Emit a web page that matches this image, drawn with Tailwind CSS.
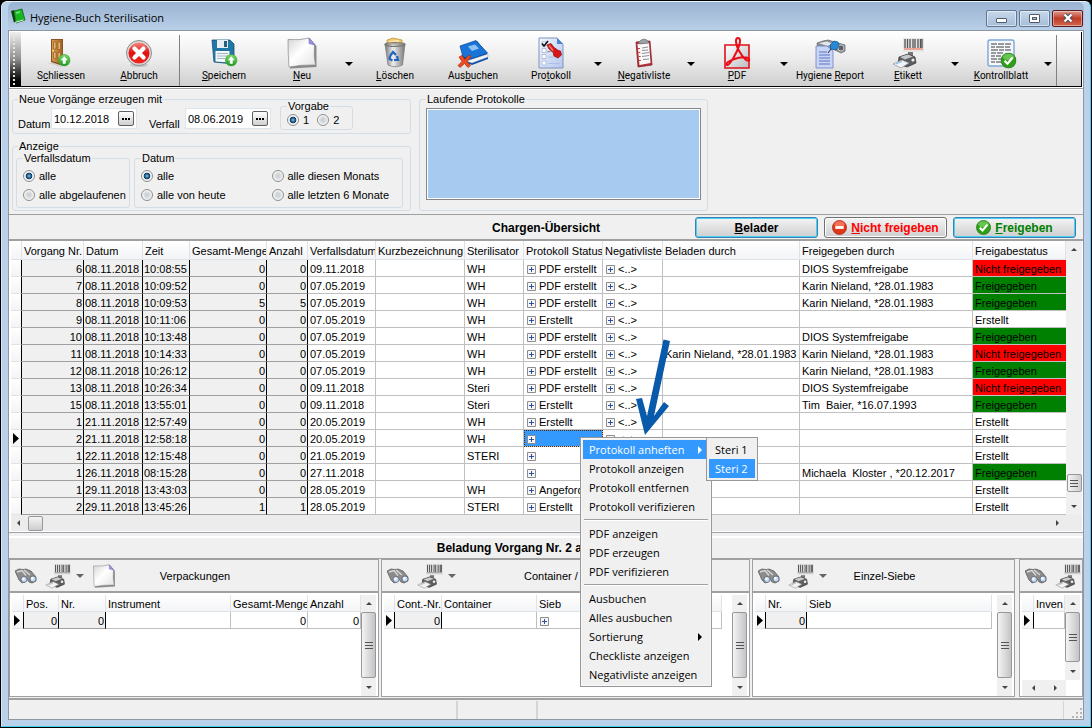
<!DOCTYPE html>
<html lang="de">
<head>
<meta charset="utf-8">
<meta name="viewport" content="width=device-width, initial-scale=1">
<title>Hygiene-Buch Sterilisation</title>
<script src="https://cdn.jsdelivr.net/npm/@tailwindcss/browser@4"></script>
</head>
<body class="bg-black font-['Liberation_Sans',Arial,sans-serif] text-[11px] leading-3 text-black">

<svg class="absolute size-0" aria-hidden="true">
  <defs>
    <linearGradient id="gGreen" x1="0" y1="0" x2="0" y2="1"><stop offset="0" stop-color="#7fdc6a"/><stop offset="1" stop-color="#179a1c"/></linearGradient>
    <linearGradient id="gRed" x1="0" y1="0" x2="0" y2="1"><stop offset="0" stop-color="#f58a80"/><stop offset=".5" stop-color="#e01010"/><stop offset="1" stop-color="#f02a20"/></linearGradient>
    <linearGradient id="gPage" x1="0" y1="0" x2="1" y2="1"><stop offset="0" stop-color="#d4d4d4"/><stop offset=".45" stop-color="#fff"/><stop offset="1" stop-color="#e2e2e2"/></linearGradient>
    <linearGradient id="gWood" x1="0" y1="0" x2="1" y2="0"><stop offset="0" stop-color="#d79a4c"/><stop offset="1" stop-color="#a96523"/></linearGradient>
    <linearGradient id="gSteel" x1="0" y1="0" x2="1" y2="0"><stop offset="0" stop-color="#777"/><stop offset=".4" stop-color="#eee"/><stop offset="1" stop-color="#777"/></linearGradient>
    <linearGradient id="gSheet" x1="0" y1="0" x2="1" y2="1"><stop offset="0" stop-color="#f4f8ff"/><stop offset="1" stop-color="#b4c6ee"/></linearGradient>
    <linearGradient id="gPdf" x1="0" y1="0" x2="1" y2="1"><stop offset="0" stop-color="#fff"/><stop offset="1" stop-color="#b9bdc1"/></linearGradient>
    <symbol id="up" viewBox="0 0 12 12"><circle cx="6" cy="6" r="5.6" fill="url(#gGreen)" stroke="#3c9a38" stroke-width=".6"/><path d="M6 2.2 9.4 6H7.4v3.4H4.6V6H2.6z" fill="#fff"/></symbol>
    <symbol id="door" viewBox="0 0 32 32">
      <path d="M3 26 16 30 22 27 17 24z" fill="#cfcfcf"/><path d="M6 2h12v25l-3 1-9-3z" fill="#8a5420"/>
      <path d="M7 3h10v24l-10-3z" fill="url(#gWood)"/><path d="M8.500 5h2.500v7h-2.500zM13 5H15.500v7.500h-2.500zM8.500 15h2.500v7l-2.500-1zM13 15.500H15.500V24l-2.500-1z" fill="#e6b878" stroke="#8c5a22" stroke-width=".7"/>
      <circle cx="8.200" cy="13.700" r="1" fill="#f5e36a"/><use href="#up" x="13" y="17" width="12.500" height="12.500"/></symbol>
    <symbol id="cancel" viewBox="0 0 32 32"><ellipse cx="16" cy="28" rx="9" ry="2" fill="#0002"/><circle cx="16" cy="16" r="12.500" fill="#d9d9d9" stroke="#8f8f8f"/><circle cx="16" cy="16" r="10.500" fill="url(#gRed)"/>
      <path d="m11.500 11.500 9 9m0-9-9 9" stroke="#fff" stroke-width="4.200" stroke-linecap="round"/></symbol>
    <symbol id="save" viewBox="0 0 32 32"><path d="M4 3h18l4 4v20L6 25z" fill="#2178a6" stroke="#125276" stroke-width=".8"/><path d="M9 3h11v8H9z" fill="#e9eef2"/><path d="M16 4h3v6h-3z" fill="#24607f"/>
      <path d="M7.500 14h14v11.500l-14-1z" fill="#f6f8fa"/><path d="M9 16.500h11M9 19h11M9 21.500h8" stroke="#9fb6c4"/><use href="#up" x="17" y="17" width="12.500" height="12.500"/></symbol>
    <symbol id="page" viewBox="0 0 32 32"><path d="M3 4 24 1.500 30.500 9v21L4 31.500z" fill="#8a8a8a"/><path d="M2 2.500Q14 3.500 23 1l5.500 7Q27.500 19 29.500 28 16 27.500 3 30 2 18 2 2.500z" fill="url(#gPage)" stroke="#888" stroke-width=".7"/>
      <path d="M23 1l6 7-6-1.500z" fill="#9a95e8" stroke="#6c68b8" stroke-width=".6"/></symbol>
    <symbol id="bin" viewBox="0 0 32 32"><path d="m8 3 6-2 9 2v6H8z" fill="#f0c76a" stroke="#b98c34" stroke-width=".7"/><path d="m10 4 10-1v5H10z" fill="#ffe6a8"/>
      <path d="M6 7h20l-2.500 21Q16 31.500 9 28z" fill="url(#gSteel)" stroke="#777" stroke-width=".7"/><ellipse cx="16" cy="7.500" rx="10" ry="1.800" fill="none" stroke="#777" stroke-width="1.300"/>
      <path d="m11 19 3-4 3 3M18 19l1 4h-4M13.500 23.500 10.500 22l.5-3" fill="none" stroke="#2065c4" stroke-width="2.200"/></symbol>
    <symbol id="book" viewBox="0 0 32 32"><path d="m6 10 14-6 11 14v4l-16 6-10-4z" fill="#0a4ea6"/><path d="m9 24 6 2 16-6v-3l-16 5z" fill="#f1f4f8" stroke="#8fa2b8" stroke-width=".5"/><path d="M3 9 19 3.500 30.500 16 14 22 6 20z" fill="#1a74d8" stroke="#0a4292" stroke-width=".7"/><path d="m11 9.500 7-2 4 4-7 2.500z" fill="#8ec4f4"/>
      <path d="m2 20 3-1.500 3 4L12 18l2 1.500-4 5 3.500 4L11 30.500l-3.500-4L3 30.500l-2-2 4-4z" fill="#f04a20" stroke="#a82808" stroke-width=".7"/></symbol>
    <symbol id="protocol" viewBox="0 0 32 32"><path d="M4 1h18l6 6v24H4z" fill="url(#gSheet)" stroke="#7f93bd"/><path d="M22 1v6h6z" fill="#4b86d8"/>
      <path d="M7 5h4v4H7zM7 11.500h4v4H7zM7 17.500h4v4H7zM7 24h4v4H7z" fill="#fff" stroke="#aab6d0" stroke-width=".8"/><path d="m7 6.500 2 2.500L13 4" fill="none" stroke="#111" stroke-width="1.600"/><path d="M13 26.500h12M13 20h6" stroke="#b0bede"/>
      <path d="m12 15 5-1" stroke="#888"/><path d="m12 8 4-1.500 3 4 4.500 3 2 .5 1 4-3.500 3-4-2-1-4-4-3z" fill="#d81818" stroke="#8c0808" stroke-width=".7"/><path d="m14 8.500 4 5" stroke="#ff7d6e" stroke-width="1.400"/></symbol>
    <symbol id="clip" viewBox="0 0 32 32"><path d="m8 5 14-1 2 24-14 2z" fill="#b82f38" stroke="#7a1a22" stroke-width=".7"/><path d="m9.500 7 11.500-1 1.500 20-11 2z" fill="#fafafa"/><path d="m11 5 2-2 3-1 3 1 2 3-10 1z" fill="#9aa0a8" stroke="#666" stroke-width=".6"/>
      <path d="m14 11 6-1m-6 3.500 6-.5m-6 3.500 7-1m-7 4 7-1m-6 4 6-.5" stroke="#8b8f96"/><path d="M11 11v1m.3 3v1m.3 3v1m.3 3v1" stroke="#d03a3a" stroke-width="2"/></symbol>
    <symbol id="pdf" viewBox="0 0 32 32"><path d="M4 8h24v23H4z" fill="url(#gPdf)" stroke="#e0101a" stroke-width="1.600"/><path d="M15 4c0-4 4-4 4 0 0 5-6 17-10 22-3 4-5 1-2-1 6-4 16-6 20-4 3 2 0 4-3 1-4-4-9-12-9-18z" fill="none" stroke="#ec0c14" stroke-width="2"/></symbol>
    <symbol id="report" viewBox="0 0 32 32"><path d="m3 6 6-2 5-1 10 3 7 2v6l-4 2-8-4H4z" fill="#8d9094" stroke="#5d6064" stroke-width=".7"/><path d="m5 6 8-1.500 6 2.500-6 2z" fill="#e4e6e8"/><circle cx="27" cy="11" r="3" fill="#5b6068" stroke="#ccc"/>
      <path d="M2 9h11l6 5v17H2z" fill="#c9d5f6" stroke="#6c82c4" stroke-width=".8"/><path d="M5 15h8M5 18h11M5 21h11M5 24h11M5 27h11" stroke="#5a72bc"/><path d="m16 8 4-4 4 1 1 4-3 4-5-1z" fill="#2788d8" stroke="#0e5496" stroke-width=".7"/><path d="m17 12-3 4" stroke="#223"/></symbol>
    <symbol id="label" viewBox="0 0 32 32"><path d="M11 1h21v14H11z" fill="#e6e6e6"/><path d="M13 2v9M15.500 2v9M18 2v9M21 2v9M23 2v9M26 2v9M28.500 2v9M30 2v9" stroke="#555" stroke-width="1.300"/><path d="M12 12h19" stroke="#f0806a" stroke-width="1.300"/>
      <path d="M16 15h5v4h-5z" fill="#777"/><path d="m7 20 9-3 7 3 1 6-9 4-9-3z" fill="#5c5f62" stroke="#2f3235" stroke-width=".7"/><path d="m8 20 8-2.500 5 2-8 3z" fill="#c6c9cc"/><path d="m1 27 9-4 7 3-8 5z" fill="#f0f4f8" stroke="#8b8f94" stroke-width=".7"/><path d="m4 27 6-2.500" stroke="#7fb8e8"/><circle cx="21" cy="23" r="1.600" fill="#eee"/></symbol>
    <symbol id="sheet" viewBox="0 0 32 32"><rect x="3" y="3" width="26" height="26" rx="2" fill="#f4f8fd" stroke="#7da6d6" stroke-width="1.400"/>
      <path d="M6 7h6m1 0h6m1 0h6M6 10h4m1 0h8m1 0h5M6 13h7m1 0h5m1 0h6M6 16h5m1 0h6M6 19h4m1 0h5M6 22h6m1 0h3M6 25h4m1 0h5" stroke="#7a7a7a" stroke-width="1.600"/><use href="#ok" x="15.500" y="15.500" width="16" height="16"/></symbol>
    <symbol id="ok" viewBox="0 0 16 16"><circle cx="8" cy="8" r="7.500" fill="#2da018" stroke="#176e0c" stroke-width=".7"/><ellipse cx="8" cy="4.500" rx="5.500" ry="3.300" fill="#8edc78" opacity=".6"/><path d="m4 8.200 3 3L12.200 5" fill="none" stroke="#fff" stroke-width="2.200"/></symbol>
    <symbol id="no" viewBox="0 0 16 16"><circle cx="8" cy="8" r="7.500" fill="#e03618" stroke="#a01c08" stroke-width=".7"/><ellipse cx="8" cy="4.500" rx="5.500" ry="3.300" fill="#ff9a80" opacity=".6"/><path d="M3.500 6.500h9v3h-9z" fill="#fff"/></symbol>
    <symbol id="bino" viewBox="0 0 22 16"><path d="m0 3 4-2 4 .5 3-.5 5 2 5 6v4l-4 2-3-1-2-3-2 1v2l-3 1-3-3z" fill="#8c8c8c" stroke="#555" stroke-width=".7"/><path d="m2 4 5-1.500 4 5M9 2l6 5" stroke="#d8d8d8" stroke-width="1.400" fill="none"/><circle cx="9" cy="11.500" r="3" fill="#bcdcff" stroke="#666" stroke-width=".8"/><circle cx="18" cy="11" r="3" fill="#bcdcff" stroke="#666" stroke-width=".8"/><circle cx="8.400" cy="10.800" r="1.200" fill="#fff"/><circle cx="17.300" cy="10.200" r="1.200" fill="#fff"/></symbol>
    <symbol id="greenbook" viewBox="0 0 16 16"><path d="m1 3 3-1 2 12-2 1z" fill="#0d3d10"/><path d="m4 3 8-2 3 11-9 3z" fill="#18b422" stroke="#0a6c12" stroke-width=".8"/><path d="m4.500 14.500 9-2.500" stroke="#eee"/><path d="m6 5 4-1" stroke="#5fe068" stroke-width="2"/></symbol>
    <symbol id="dn" viewBox="0 0 8 4"><path d="M0 0h8L4 4z" fill="currentColor"/></symbol>
    <symbol id="upt" viewBox="0 0 8 4"><path d="M0 4h8L4 0z" fill="currentColor"/></symbol>
    <symbol id="lt" viewBox="0 0 4 8"><path d="M4 0v8L0 4z" fill="currentColor"/></symbol>
    <symbol id="rt" viewBox="0 0 4 8"><path d="M0 0v8l4-4z" fill="currentColor"/></symbol>
    <symbol id="mark" viewBox="0 0 6 11"><path d="M0 0v11l6-5.500z"/></symbol>
    <symbol id="plus" viewBox="0 0 9 9"><path d="M.5.5h8v8h-8z" fill="#f6f6f6" stroke="#8c8c8c"/><path d="M4.500 2v5M2 4.500h5" stroke="#2a4fa8"/></symbol>
  </defs>
</svg>

<div class="relative flex min-h-screen flex-col bg-black p-px">
<main class="flex flex-1 flex-col rounded-t-md border border-t-[#eaf2fa] border-r-[#3fd0ea] border-b-[#3fd0ea] border-l-[#d5e6f5] bg-[#b9d1ea] px-[6px] pb-[6px]">

  <header class="flex h-7 items-center rounded-t-md bg-linear-to-b from-[#9ab3d1] to-[#b9cfe8] pl-[2px] pr-px">
    <svg class="mr-1 size-4"><use href="#greenbook"/></svg>
    <h1 class="flex-1 pt-1 font-['Open_Sans',sans-serif] text-[11px] leading-4">Hygiene-Buch Sterilisation</h1>
    <div class="mt-1 flex gap-[2px]">
      <button aria-label="Minimieren" class="flex h-[17px] w-[31px] items-center justify-center rounded-[2px] border border-[#5f7590] bg-linear-to-b from-[#c7d8ea] to-[#a5bdd8] inset-ring inset-ring-white/50"><span class="mt-1 h-[5px] w-[11px] rounded-[1px] border border-[#515c6b] bg-white"></span></button>
      <button aria-label="Maximieren" class="flex h-[17px] w-[31px] items-center justify-center rounded-[2px] border border-[#5f7590] bg-linear-to-b from-[#c7d8ea] to-[#a5bdd8] inset-ring inset-ring-white/50"><span class="flex h-[9px] w-[11px] items-center justify-center rounded-[1px] border border-[#515c6b] bg-white"><span class="h-[3px] w-[5px] border border-[#515c6b] bg-[#a5bdd8]"></span></span></button>
      <button aria-label="Schließen" class="flex h-[17px] w-[31px] items-center justify-center rounded-[2px] border border-[#5c1a1a] bg-linear-to-b from-[#dc9a90] via-[#bf3a24] to-[#d06850] inset-ring inset-ring-white/40"><svg class="h-[10px] w-3" viewBox="0 0 12 10"><path d="m2.500 1.500 7 7m0-7-7 7" stroke="#4a4f5c" stroke-width="4"/><path d="m2.500 1.500 7 7m0-7-7 7" stroke="#fff" stroke-width="2.200"/></svg></button>
    </div>
  </header>

  <div class="flex flex-1 flex-col border border-[#8f979f] bg-[#f0f0f0]">

    <!-- Werkzeugleiste -->
    <div class="border-b border-[#a0a0a0] bg-white p-px">
      <div id="toolbar" role="toolbar" class="flex h-[55px] items-stretch border-r border-b border-black bg-linear-to-b from-white via-[#ececec] to-[#cfcfcf]">
        <span class="mr-px w-[11px] bg-linear-to-b from-[#f0f0f0] via-[#909090] to-black pt-1 pb-px pl-[3px]"><span class="block h-full border-l-2 border-dotted border-[#e4e4e4]"></span></span>
      </div>
    </div>

    <!-- Filter -->
    <div class="flex gap-2 border-t border-white pt-[3px] pb-[3px] pl-[3px]">
      <div class="flex w-[399px] flex-col gap-[6px]">
        <fieldset class="h-[41px] rounded-[3px] border border-[#d3dde5] pl-1">
          <legend class="ml-px px-px">Neue Vorgänge erzeugen mit</legend>
          <div class="flex items-start">
            <label for="d1" class="mt-[13px] w-[34px] pl-px">Datum</label>
            <span class="mt-[3px] flex h-[21px] w-[86px] items-center border border-[#dde5ec] bg-white pr-[2px]">
              <input id="d1" value="10.12.2018" class="w-0 flex-1 pl-[2px] outline-none">
              <button aria-label="Datum wählen" class="flex h-[15px] w-4 items-center justify-center rounded-[2px] border border-[#606060] bg-linear-to-b from-white to-[#cfcfcf]"><svg class="h-[2px] w-2" viewBox="0 0 8 2"><path d="M0 0h2v2H0zM3 0h2v2H3zM6 0h2v2H6z"/></svg></button>
            </span>
            <label for="d2" class="mt-[13px] ml-3 w-9">Verfall</label>
            <span class="mt-[3px] flex h-[21px] w-[86px] items-center border border-[#dde5ec] bg-white pr-[2px]">
              <input id="d2" value="08.06.2019" class="w-0 flex-1 pl-[2px] outline-none">
              <button aria-label="Verfall wählen" class="flex h-[15px] w-4 items-center justify-center rounded-[2px] border border-[#606060] bg-linear-to-b from-white to-[#cfcfcf]"><svg class="h-[2px] w-2" viewBox="0 0 8 2"><path d="M0 0h2v2H0zM3 0h2v2H3zM6 0h2v2H6z"/></svg></button>
            </span>
            <fieldset class="-mt-[5px] ml-[9px] h-[30px] w-[73px] rounded-[3px] border border-[#d3dde5] pl-[6px]">
              <legend class="px-px">Vorgabe</legend>
              <div class="flex gap-2 pt-px" data-radios="vorgabe" data-kind="short"></div>
            </fieldset>
          </div>
        </fieldset>
        <fieldset class="h-[71px] rounded-[3px] border border-[#d3dde5] pl-[3px]">
          <legend class="ml-[2px] px-px">Anzeige</legend>
          <div class="flex gap-1">
            <fieldset class="h-[56px] w-[114px] rounded-[3px] border border-[#d3dde5] pl-[6px]">
              <legend class="px-px">Verfallsdatum</legend>
              <div class="grid pt-[2px]" data-radios="verfall" data-kind="long"></div>
            </fieldset>
            <fieldset class="h-[56px] w-[269px] rounded-[3px] border border-[#d3dde5] pl-[6px]">
              <legend class="px-px">Datum</legend>
              <div class="grid grid-cols-2 pt-[2px]" data-radios="datum" data-kind="long"></div>
            </fieldset>
          </div>
        </fieldset>
      </div>
      <fieldset class="h-[118px] w-[289px] rounded-[3px] border border-[#d3dde5] px-[6px]">
        <legend class="px-px">Laufende Protokolle</legend>
        <div class="mt-[3px] h-[92px] border border-[#828790] bg-[#a6caf0] inset-ring inset-ring-white"></div>
      </fieldset>
    </div>

    <!-- Chargen-Übersicht -->
    <div class="grid h-[27px] grid-cols-[1fr_auto_1fr] items-center border-t border-b-2 border-[#a0a0a0]">
      <h2 class="col-start-2 pt-px text-xs font-bold">Chargen-Übersicht</h2>
      <div class="flex justify-end gap-[6px] pr-[7px] text-xs font-bold">
        <button class="flex h-[21px] w-[123px] items-center justify-center gap-1 rounded-[3px] border border-[#3c7fb1] bg-linear-to-b from-[#f4f4f4] to-[#cfcfcf] pt-px inset-ring inset-ring-[#48d0f4]"><span><u>B</u>elader</span></button>
        <button class="flex h-[21px] w-[123px] items-center justify-center gap-1 rounded-[3px] border border-[#707070] bg-linear-to-b from-[#f4f4f4] to-[#cfcfcf] pt-px text-[#f00] inset-ring inset-ring-white"><svg class="size-[15px]"><use href="#no"/></svg><span><u>N</u>icht freigeben</span></button>
        <button class="flex h-[21px] w-[123px] items-center justify-center gap-1 rounded-[3px] border border-[#3c7fb1] bg-linear-to-b from-[#f4f4f4] to-[#cfcfcf] pt-px text-[#008000] inset-ring inset-ring-[#48d0f4]"><svg class="size-[15px]"><use href="#ok"/></svg><span><u>F</u>reigeben</span></button>
      </div>
    </div>

    <div class="border-b border-[#a0a0a8] bg-white pb-px pl-[2px] pr-px">
      <div class="flex">
        <table class="w-full table-fixed border-separate border-spacing-0">
          <colgroup><col class="w-[11px]"><col class="w-[62px]"><col class="w-[59px]"><col class="w-[47px]"><col class="w-[77px]"><col class="w-[41px]"><col class="w-[68px]"><col class="w-[89px]"><col class="w-[59px]"><col class="w-[79px]"><col class="w-[60px]"><col class="w-[137px]"><col class="w-[173px]"><col></colgroup>
          <thead><tr id="mainHead" class="h-[19px] text-left"></tr></thead>
          <tbody id="mainBody"></tbody>
        </table>
        <div class="flex w-4 shrink-0 flex-col items-center bg-[#f0f0f0]">
          <button aria-label="Nach oben" class="flex h-[17px] w-full items-center justify-center text-[#444]"><svg class="h-[3px] w-[6px]"><use href="#upt"/></svg></button>
          <div class="flex-1"></div>
          <div class="mb-[6px] flex h-[18px] w-[15px] flex-col items-center justify-center gap-[2px] rounded-[2px] border border-[#979797] bg-linear-to-r from-[#f4f4f4] to-[#cdcdcd]"><i class="h-px w-2 bg-[#555]"></i><i class="h-px w-2 bg-[#555]"></i><i class="h-px w-2 bg-[#555]"></i></div>
          <button aria-label="Nach unten" class="flex h-[17px] w-full items-center justify-center text-[#444]"><svg class="h-[3px] w-[6px]"><use href="#dn"/></svg></button>
        </div>
      </div>
      <div class="flex h-4 items-center bg-[#ececec] pr-4">
        <button aria-label="Nach links" class="flex h-full w-[15px] items-center justify-center text-[#444]"><svg class="h-[6px] w-[3px]"><use href="#lt"/></svg></button>
        <div class="ml-[2px] h-[15px] w-[15px] rounded-[2px] border border-[#979797] bg-linear-to-b from-[#f4f4f4] to-[#cdcdcd]"></div>
        <div class="flex-1"></div>
        <button aria-label="Nach rechts" class="flex h-full w-[17px] items-center justify-center text-[#444]"><svg class="h-[6px] w-[3px]"><use href="#rt"/></svg></button>
      </div>
    </div>

    <h2 class="mt-[3px] flex h-[23px] items-center justify-center border-t-2 border-b border-t-white border-b-[#a0a0a0] text-xs font-bold">Beladung Vorgang Nr. 2 am 21.11.2018</h2>

    <!-- Detailbereiche -->
    <div id="panels" class="flex flex-1 gap-[2px]"></div>

    <footer class="mt-px flex h-[21px] items-stretch border-t-2 border-[#a0a0a0] pt-px">
      <span class="w-[449px] border-r-2 border-[#d5d5d5]"></span><span class="w-20 border-r-2 border-[#d5d5d5]"></span><span class="flex-1 border-r border-[#d5d5d5]"></span>
      <span class="flex w-[19px] items-end justify-end"><svg class="size-[11px]" viewBox="0 0 11 11"><path d="M8 0h2v2H8zM4 4h2v2H4zM8 4h2v2H8zM0 8h2v2H0zM4 8h2v2H4zM8 8h2v2H8z" fill="#b4b4b4"/></svg></span>
    </footer>
  </div>
</main>

<!-- Kontextmenü -->
<ul role="menu" id="menu" class="absolute top-[437px] left-[580px] w-[132px] border border-[#979797] bg-[#f0f0f0] p-[2px] font-['Open_Sans',sans-serif] text-[11px] leading-[19px] shadow-[inset_0_0_0_1px_#f8f8f8]"></ul>
<ul role="menu" class="absolute top-[437px] left-[706px] w-[52px] border border-[#979797] bg-[#f0f0f0] p-[2px] font-['Open_Sans',sans-serif] text-[11px] leading-[19px]">
  <li role="menuitem" class="pl-[6px]">Steri 1</li>
  <li role="menuitem" class="bg-[#3399ff] pl-[6px] text-white">Steri 2</li>
</ul>
<svg class="absolute top-[338px] left-[634px] h-[98px] w-[38px]" viewBox="0 0 38 98" aria-hidden="true"><path d="M29.500 1.500 36 3 20 78 30 64 35 68 11 97 2 61 8 60 13 78z" fill="#0a5aab"/></svg>
</div>

<script>
const icon = (id, cls) => `<svg class="${cls}" aria-hidden="true"><use href="#${id}"/></svg>`;

/* Werkzeugleiste: [Symbol, Beschriftung, Auswahlpfeil]; null = Trennlinie */
const tools = [['door','S<u>c</u>hliessen'],['cancel','<u>A</u>bbruch'],null,['save','<u>S</u>peichern'],['page','<u>N</u>eu',1],['bin','<u>L</u>öschen'],['book','Aus<u>b</u>uchen'],['protocol','Pro<u>t</u>okoll',1],['clip','<u>N</u>egativliste',1],['pdf','<u>P</u>DF',1],['report','Hygiene <u>R</u>eport'],['label','<u>E</u>tikett',1],['sheet','<u>K</u>ontrollblatt',1],null];
document.getElementById('toolbar').insertAdjacentHTML('beforeend', tools.map(t => t
  ? `<button class="flex w-[78px] flex-col items-center pt-[5px] font-['Roboto',sans-serif] text-[10px] leading-3 whitespace-nowrap">${icon(t[0],'mb-px size-8')}<span>${t[1]}</span></button>` +
    (t[2] ? `<button aria-label="Mehr" class="flex w-[15px] items-center justify-center pt-[10px]">${icon('dn','h-1 w-2')}</button>` : '')
  : `<span class="mt-[3px] mr-[5px] ml-px border-l border-[#808080]"></span>`).join(''));

/* Optionsfelder */
const radios = { vorgabe:['1','2'], verfall:['alle','alle abgelaufenen'], datum:['alle','alle diesen Monats','alle von heute','alle letzten 6 Monate'] };
document.querySelectorAll('[data-radios]').forEach(box => {
  const name = box.dataset.radios, short = box.dataset.kind === 'short';
  box.innerHTML = radios[name].map((t, i) => `<label class="${short ? 'flex h-[14px] items-center gap-1' : 'flex h-[19px] items-center gap-1'}"><input type="radio" name="${name}" ${i ? '' : 'checked'} class="size-3 appearance-none rounded-full border border-[#8e8f8f] bg-[radial-gradient(circle,#cfd4d8_25%,#f6f6f6_70%)] checked:bg-[radial-gradient(circle,#7cc4ea_0,#1b5480_32%,#123e66_42%,#f4f4f4_52%)]">${t}</label>`).join('');
});

/* Tabellen */
const headCls = 'border-r border-b border-[#dfe3e8] bg-linear-to-b from-white to-[#f3f4f6] pt-px pl-[2px] font-normal whitespace-nowrap overflow-hidden';
const markCls = 'border-r border-b border-r-black border-b-[#e3e3e3] bg-linear-to-b from-white to-[#f3f4f6] p-0';
const fixCls  = 'border-r border-b border-r-black border-b-[#a0a0a0] bg-[#f0f0f0] px-px pt-px whitespace-nowrap';
const fixNum  = 'border-r border-b border-r-black border-b-[#a0a0a0] bg-[#f0f0f0] px-px pt-px text-right whitespace-nowrap';
const cellCls = 'overflow-hidden border-r border-b border-[#c0c0c0] pt-px pl-[2px] whitespace-nowrap';
const numCls  = 'overflow-hidden border-r border-b border-[#c0c0c0] pt-px pr-px text-right whitespace-nowrap';
const mark = icon('mark', 'ml-[2px] h-[11px] w-[6px]');
const heads = ['','Vorgang Nr.','Datum','Zeit','Gesamt-Menge','Anzahl','Verfallsdatum','Kurzbezeichnung','Sterilisator','Protokoll Status','Negativliste','Beladen durch','Freigegeben durch','Freigabestatus'];
document.getElementById('mainHead').innerHTML = heads.map(h => `<th class="${headCls}">${h}</th>`).join('');
const K = 'Karin Nieland, *28.01.1983', D = 'DIOS Systemfreigabe';
const rows = [
 [6,'08.11.2018','10:08:55',0,'09.11.2018','WH','PDF erstellt','',D,'N'],
 [7,'08.11.2018','10:09:52',0,'07.05.2019','WH','PDF erstellt','',K,'F'],
 [8,'08.11.2018','10:09:53',5,'07.05.2019','WH','PDF erstellt','',K,'F'],
 [9,'08.11.2018','10:11:06',0,'07.05.2019','WH','Erstellt','','','E'],
 [10,'08.11.2018','10:13:48',0,'07.05.2019','WH','PDF erstellt','',D,'F'],
 [11,'08.11.2018','10:14:33',0,'07.05.2019','WH','PDF erstellt',K,K,'N'],
 [12,'08.11.2018','10:26:12',0,'07.05.2019','WH','PDF erstellt','',K,'F'],
 [13,'08.11.2018','10:26:34',0,'09.11.2018','Steri','PDF erstellt','',D,'N'],
 [15,'08.11.2018','13:55:01',0,'09.11.2018','Steri','Erstellt','','Tim&nbsp; Baier, *16.07.1993','F'],
 [1,'21.11.2018','12:57:49',0,'20.05.2019','WH','Erstellt','','','E'],
 [2,'21.11.2018','12:58:18',0,'20.05.2019','WH','','','','E'],
 [1,'22.11.2018','12:15:48',0,'21.05.2019','STERI','','','','E'],
 [1,'26.11.2018','08:15:28',0,'27.11.2018','','','','Michaela&nbsp; Kloster , *20.12.2017','F'],
 [1,'29.11.2018','13:43:03',0,'28.05.2019','WH','Angefordert','','','E'],
 [2,'29.11.2018','13:45:26',1,'28.05.2019','STERI','Erstellt','','','E']];
const status = {
  N: '<td class="overflow-hidden border-b border-[#c0c0c0] bg-[#f00] pt-px pl-[2px] whitespace-nowrap">Nicht freigegeben</td>',
  F: '<td class="overflow-hidden border-b border-[#c0c0c0] bg-[#008000] pt-px pl-[2px] whitespace-nowrap">Freigegeben</td>',
  E: '<td class="overflow-hidden border-b border-[#c0c0c0] pt-px pl-[2px] whitespace-nowrap">Erstellt</td>' };
const plus = icon('plus', 'mr-[3px] ml-px inline size-[9px] align-[-1px]');
document.getElementById('mainBody').innerHTML = rows.map((r, i) => `<tr class="h-[17px]">
  <td class="${markCls}">${i === 10 ? mark : ''}</td><td class="${fixNum}">${r[0]}</td><td class="${fixCls}">${r[1]}</td><td class="${fixCls}">${r[2]}</td><td class="${fixNum}">${r[3]}</td><td class="${fixNum}">${r[3]}</td>
  <td class="${cellCls}">${r[4]}</td><td class="${cellCls}"></td><td class="${cellCls}">${r[5]}</td>
  <td class="${i === 10 ? 'overflow-hidden border-r border-b border-[#c0c0c0] bg-[#3399ff] pt-px pl-[2px] outline outline-dotted -outline-offset-1 outline-[#5a2a00]' : cellCls}">${plus}${r[6]}</td><td class="${cellCls}">${plus}&lt;..&gt;</td>
  <td class="${cellCls}">${r[7]}</td><td class="${cellCls}">${r[8]}</td>${status[r[9]]}</tr>`).join('');

/* Detailbereiche unten */
const vbar = (cls) => `<div class="${cls}"><button aria-label="Nach oben" class="flex h-[17px] items-center justify-center text-[#444]">${icon('upt','h-[3px] w-[6px]')}</button>
  <div class="mb-px flex flex-1 flex-col items-center justify-center gap-[2px] rounded-[2px] border border-[#979797] bg-linear-to-r from-[#f4f4f4] to-[#c4c4c8]"><i class="h-px w-2 bg-[#555]"></i><i class="h-px w-2 bg-[#555]"></i><i class="h-px w-2 bg-[#555]"></i></div>
  <button aria-label="Nach unten" class="flex h-[17px] items-center justify-center text-[#444]">${icon('dn','h-[3px] w-[6px]')}</button></div>`;
const panels = [
 { cls:'flex min-w-0 w-[370px] flex-col border border-[#a0a0a0]', title:'Verpackungen', arrow:1, page:1, bar:'flex w-[15px] shrink-0 flex-col bg-[#f0f0f0] mr-[2px]',
   cols:['w-[12px]','w-[35px]','w-[47px]','w-[125px]','w-[77px]',''], heads:['','Pos.','Nr.','Instrument','Gesamt-Menge','Anzahl'], cells:[['m',''],['f','0'],['f','0'],['c',''],['n','0'],['n','0']] },
 { cls:'flex min-w-0 w-[369px] flex-col border border-[#a0a0a0]', title:'Container / Siebe', arrow:1, bar:'ml-[10px] flex w-[15px] shrink-0 flex-col bg-[#f0f0f0] mr-[2px]',
   cols:['w-[11px]','w-[47px]','w-[95px]',''], heads:['','Cont.-Nr.','Container','Sieb'], cells:[['m',''],['f','0'],['c',''],['c',plus]] },
 { cls:'mr-[2px] flex min-w-0 flex-1 flex-col border border-[#a0a0a0]', title:'Einzel-Siebe', arrow:1, bar:'ml-[5px] flex w-[15px] shrink-0 flex-col bg-[#f0f0f0] mr-[2px]',
   cols:['w-[11px]','w-[41px]',''], heads:['','Nr.','Sieb'], cells:[['m',''],['f','0'],['c','']] },
 { cls:'flex min-w-0 w-[64px] flex-col overflow-hidden border border-[#a0a0a0]', title:'', bar:'flex w-[15px] shrink-0 flex-col bg-[#f0f0f0] mr-[2px]', hbar:1,
   cols:['w-[12px]',''], heads:['','Inven'], cells:[['m',''],['c','']] } ];
const kinds = { m:markCls, f:fixNum, c:cellCls, n:numCls };
document.getElementById('panels').innerHTML = panels.map(p => `<section class="${p.cls}">
  <div class="grid h-[33px] grid-cols-[1fr_auto_1fr] items-center border-b-2 border-[#a0a0a0] pl-[5px]">
    <div class="flex w-0 items-center">
      <button aria-label="Suchen" class="mr-2 shrink-0">${icon('bino','h-4 w-[22px]')}</button>
      <button aria-label="Etikett drucken" class="mr-[5px] shrink-0 grayscale">${icon('label','size-[26px]')}</button>
      ${p.arrow ? `<button aria-label="Mehr" class="mr-2 shrink-0 text-[#666]">${icon('dn','h-[4px] w-[8px]')}</button>` : ''}
      ${p.page ? `<button aria-label="Neu" class="shrink-0">${icon('page','size-6')}</button>` : ''}
    </div><h3 class="pr-[3px]">${p.title}</h3></div>
  <div class="flex flex-1 flex-col bg-white pt-[2px]">
    <div class="flex flex-1 pl-[2px]">
      <div class="min-w-0 flex-1"><table class="w-full table-fixed border-separate border-spacing-0"><colgroup>${p.cols.map(c => `<col class="${c}">`).join('')}</colgroup>
        <thead><tr class="h-[17px] text-left">${p.heads.map(h => `<th class="${headCls}">${h}</th>`).join('')}</tr></thead>
        <tbody><tr class="h-[17px]">${p.cells.map(c => `<td class="${kinds[c[0]]}">${c[0] === 'm' ? mark : c[1]}</td>`).join('')}</tr></tbody></table></div>
      ${vbar(p.bar)}
    </div>
    ${p.hbar ? `<div class="mr-4 ml-[2px] flex h-4 items-center justify-around bg-[#f0f0f0] text-[#444]"><button aria-label="Nach links">${icon('lt','h-[6px] w-[3px]')}</button><button aria-label="Nach rechts">${icon('rt','h-[6px] w-[3px]')}</button></div>` : ''}
  </div></section>`).join('');

/* Kontextmenü: '-' = Trennlinie */
const menu = ['Protokoll anheften','Protokoll anzeigen','Protokoll entfernen','Protokoll verifizieren','-','PDF anzeigen','PDF erzeugen','PDF verifizieren','-','Ausbuchen','Alles ausbuchen','Sortierung','Checkliste anzeigen','Negativliste anzeigen'];
document.getElementById('menu').innerHTML = menu.map((m, i) => m === '-'
  ? '<li role="separator" class="mx-px my-[3px] h-[2px] border-t border-b border-t-[#a0a0a0] border-b-white"></li>'
  : `<li role="menuitem" class="${i === 0 ? 'flex items-center justify-between bg-[#3399ff] pr-[7px] pl-[6px] text-white whitespace-nowrap' : 'flex items-center justify-between pr-[7px] pl-[6px] whitespace-nowrap'}">${m}${i === 0 || m === 'Sortierung' ? icon('rt','h-2 w-1') : ''}</li>`).join('');
</script>
</body>
</html>
